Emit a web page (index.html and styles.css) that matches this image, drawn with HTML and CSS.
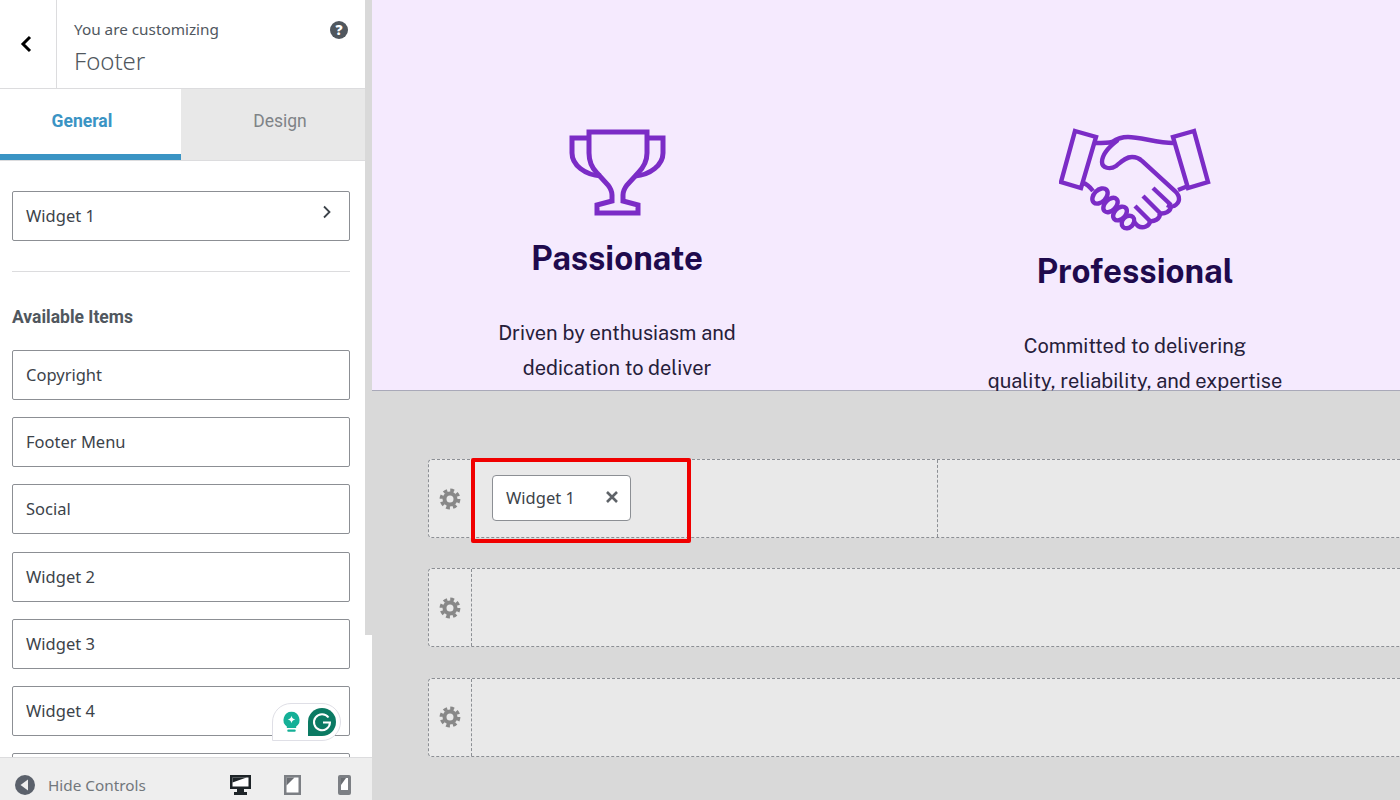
FILE: index.html
```html
<!DOCTYPE html>
<html lang="en">
  <head>
    <meta charset="UTF-8" />
    <title>Customizing Footer</title>
    <link rel="stylesheet" href="styles.css">
  </head>
  <body>
    <div class="app">
      <aside class="sidebar">
        <div class="sidebar-main">
          <div class="panel">
            <header class="panel-head">
              <div class="back-cell">
                <svg width="14" height="20" viewBox="0 0 14 20"><path d="M11 3 4 10l7 7" fill="none" stroke="#000" stroke-width="3"/></svg>
              </div>
              <div class="title-cell">
                <span class="title-small">You are customizing</span>
                <span class="title-big">Footer</span>
              </div>
              <svg class="help-icon" width="18" height="18" viewBox="0 0 18 18">
                <circle cx="9" cy="9" r="9" fill="#50575e"/>
                <text x="9" y="14" text-anchor="middle" class="help-mark">?</text>
              </svg>
            </header>

            <div class="tabs">
              <div class="tab tab-active">General</div>
              <div class="tab tab-design">Design</div>
            </div>

            <div class="panel-body">
              <div class="item item-link">
                Widget 1
                <svg class="item-arrow" width="10" height="14" viewBox="0 0 10 14"><path d="M2 1.5 7.5 7 2 12.500" fill="none" stroke="#3c434a" stroke-width="1.800"/></svg>
              </div>
              <hr class="divider" />
              <h3 class="group-title">Available Items</h3>
              <div class="item-list">
                <div class="item">Copyright</div>
                <div class="item">Footer Menu</div>
                <div class="item">Social</div>
                <div class="item">Widget 2</div>
                <div class="item">Widget 3</div>
                <div class="item">Widget 4</div>
                <div class="item"></div>
              </div>
            </div>
          </div>
          <div class="scroll-track"></div>
        </div>

        <div class="grammarly">
          <svg width="19" height="22" viewBox="0 0 22 26">
            <path d="M11 1a9.500 9.500 0 0 0-5.500 17.200V20h11v-1.800A9.500 9.500 0 0 0 11 1z" fill="#15b097"/>
            <path d="M11 5.500c.6 2.800 1.700 3.900 4.500 4.500-2.800.6-3.900 1.700-4.500 4.500-.6-2.800-1.700-3.900-4.500-4.500 2.800-.6 3.900-1.700 4.500-4.500z" fill="#fff"/>
            <rect x="6" y="22" width="10" height="2.500" rx="1.200" fill="#15b097"/>
          </svg>
          <svg width="28" height="28" viewBox="0 0 28 28">
            <path d="M14 0a14 14 0 0 1 0 28H0V14A14 14 0 0 1 14 0z" fill="#0b7a63"/>
            <path d="M20.500 9.500a8 8 0 1 0 1.500 5H15" fill="none" stroke="#fff" stroke-width="2"/>
          </svg>
        </div>

        <footer class="controls">
          <div class="hide-controls">
            <svg width="20" height="20" viewBox="0 0 20 20">
              <circle cx="10" cy="10" r="10" fill="#5b616b"/>
              <path d="M13 4.500v11L5.500 10z" fill="#eee"/>
            </svg>
            <span>Hide Controls</span>
          </div>
          <div class="devices">
            <svg width="21" height="20" viewBox="0 0 21 20">
              <path d="M0 0h21v14h-7v3h3v3H4v-3h3v-3H0z" fill="#1d2327"/>
              <path d="M2.500 2.500h16v9h-16z" fill="#fff"/>
              <path d="M2.500 2.500h14L2.500 7.500z" fill="#1d2327"/>
            </svg>
            <svg width="17" height="20" viewBox="0 0 17 20">
              <path d="M0 0h17v20H0z" fill="#7c7f84"/>
              <path d="M2.500 2.500h12v15h-12z" fill="#fff"/>
              <path d="M2.500 2.500h8l-8 8z" fill="#6a6d72"/>
            </svg>
            <svg class="device-phone" width="13" height="20" viewBox="0 0 13 20">
              <rect width="13" height="20" rx="2" fill="#7c7f84"/>
              <path d="M3 3h7v12H3z" fill="#fff"/>
              <path d="M3 3h5l-5 7z" fill="#6a6d72"/>
            </svg>
          </div>
        </footer>
      </aside>

      <main class="preview">
        <section class="site">
          <div class="feature">
            <svg class="feature-icon" width="103" height="90" viewBox="26 17 103 90">
              <g fill="none" stroke="#7b2cc6" stroke-width="5">
                <path d="M49 22H107V43C107 52 103 58 98 63L87 75C84 79 83 81 83 85V91L98 95V103H57V95L72 91V85C72 81 71 79 68 75L57 63C52 58 49 52 49 43Z"/>
                <path d="M49 28H32V43C32 55 45 65 61 66"/>
                <path d="M107 28H123V43C123 55 110 65 95 66"/>
              </g>
            </svg>
            <h2 class="title-one">Passionate</h2>
            <p>Driven by enthusiasm and<br>dedication to deliver</p>
          </div>
          <div class="feature feature-two">
            <svg class="feature-icon" width="152" height="104" viewBox="19 18 152 104">
              <g fill="none" stroke="#7b2cc6" stroke-width="4.400">
                <path d="M35 21 56 27 41 78 21 72Z"/>
                <path d="M154 21 133 27 148 78 168 72Z"/>
                <path d="M55 33C62 33 68 33 72 32C78 28 82 27 88 27C100 27 118 33 133 33"/>
                <path d="M78 30C70 36 62 44 62 52C62 58 70 60 76 56C82 51 86 47 92 47C96 47 99 48 102 51L135 81C141 87 140 93 134 96C131 97 129 96 127 95"/>
                <path d="M148 76 138 80"/>
                <path d="M43 73C47 74 50 77 53 81"/>
                <path d="M113 78 131 95"/>
                <path d="M131 96C131 101 125 105 118 103"/>
                <path d="M103 86 120 103"/>
                <path d="M120 104C120 109 114 112 109 111"/>
                <path d="M95 96 110 111"/>
                <path d="M110 111C110 116 103 119 98 116L93 111"/>
                <ellipse cx="60" cy="86" rx="6" ry="9" transform="rotate(45 60 86)"/>
                <ellipse cx="70.500" cy="95" rx="5.500" ry="8.500" transform="rotate(45 70.500 95)"/>
                <ellipse cx="80" cy="103.500" rx="5.500" ry="8" transform="rotate(45 80 103.500)"/>
                <ellipse cx="88" cy="112" rx="5.500" ry="7" transform="rotate(45 88 112)"/>
              </g>
            </svg>
            <h2 class="title-two">Professional</h2>
            <p>Committed to delivering<br>quality, reliability, and expertise</p>
          </div>
        </section>

        <section class="builder">
          <div class="row">
            <div class="row-gear">
              <svg class="gear" width="22" height="22" viewBox="0 0 22 22"><use href="#gear"/></svg>
            </div>
            <div class="row-col row-col-first">
              <div class="chip">
                <span>Widget 1</span>
                <svg width="14" height="14" viewBox="0 0 14 14"><path d="M2 2l10 10M12 2 2 12" stroke="#5f6368" stroke-width="2.600"/></svg>
              </div>
            </div>
            <div class="row-col"></div>
            <div class="highlight"></div>
          </div>
          <div class="row">
            <div class="row-gear">
              <svg class="gear" width="22" height="22" viewBox="0 0 22 22"><use href="#gear"/></svg>
            </div>
            <div class="row-col"></div>
          </div>
          <div class="row">
            <div class="row-gear">
              <svg class="gear" width="22" height="22" viewBox="0 0 22 22"><use href="#gear"/></svg>
            </div>
            <div class="row-col"></div>
          </div>
        </section>
      </main>
    </div>

    <svg width="0" height="0" class="defs">
      <defs>
        <g id="gear" fill="none" stroke="#888">
          <circle cx="11" cy="11" r="5.500" stroke-width="4"/>
          <circle cx="11" cy="11" r="8.700" stroke-width="3.400" stroke-dasharray="3.800 3.030"/>
        </g>
      </defs>
    </svg>
  </body>
</html>
```

FILE: styles.css
```css
* {
  box-sizing: border-box;
}

html,
body {
  margin: 0;
  height: 100%;
  overflow: hidden;
}

body {
  font-family: "Noto Sans", "Open Sans", sans-serif;
  color: #3c434a;
  background: #d9d9d9;
}

.app {
  display: flex;
  height: 800px;
}

/* ===== Sidebar ===== */
.sidebar {
  position: relative;
  flex: 0 0 372px;
  display: flex;
  flex-direction: column;
  height: 800px;
  background: #fff;
}

.sidebar-main {
  flex: 1;
  display: flex;
  min-height: 0;
  overflow: hidden;
}

.panel {
  flex: 0 0 365px;
}

.scroll-track {
  flex: 0 0 7px;
  height: 635px;
  background: #d9d9d9;
}

.panel-head {
  position: relative;
  display: flex;
  height: 89px;
  border-bottom: 1px solid #dcdcde;
}

.back-cell {
  flex: 0 0 57px;
  display: flex;
  align-items: center;
  padding-left: 19px;
  border-right: 1px solid #dcdcde;
}

.title-cell {
  display: flex;
  flex-direction: column;
  padding: 19px 0 0 17px;
}

.title-small {
  font-size: 15.300px;
  line-height: 20px;
  color: #50575e;
}

.title-big {
  margin-top: 2px;
  font-size: 24px;
  line-height: 40px;
  font-weight: 300;
  color: #50575e;
}

.help-icon {
  position: absolute;
  top: 21px;
  right: 17px;
}

.help-mark {
  font-family: "Open Sans", sans-serif;
  font-size: 14px;
  font-weight: 800;
  fill: #fff;
}

.tabs {
  display: flex;
  height: 72px;
  border-bottom: 1px solid #dcdcde;
}

.tab {
  flex: 1;
  display: flex;
  align-items: center;
  justify-content: center;
  padding-bottom: 8px;
  font-family: Roboto, sans-serif;
  font-size: 17.500px;
  color: #7f8387;
  background: #e8e8e8;
}

.tab-design {
  padding-left: 14px;
}

.tab-active {
  flex: 0 0 181px;
  font-weight: 700;
  color: #3a94c4;
  background: #fff;
  border-bottom: 6px solid #3a94c4;
  padding: 0 17px 2px 0;
}

.panel-body {
  padding: 30px 15px 0 12px;
}

.item {
  display: flex;
  align-items: center;
  height: 50px;
  padding: 0 0 1px 13px;
  border: 1px solid #8c8f94;
  border-radius: 2px;
  font-size: 16.500px;
  color: #3c434a;
  background: #fff;
}

.item-link {
  justify-content: space-between;
  padding: 0 17px 2px 13px;
}

.item-arrow {
  margin-bottom: 6px;
}

.divider {
  height: 1px;
  margin: 30px 0 0;
  border: 0;
  background: #dcdcde;
}

.group-title {
  margin: 35px 0 0;
  font-family: Roboto, sans-serif;
  font-size: 17.500px;
  line-height: 20px;
  font-weight: 700;
  color: #50575e;
}

.item-list {
  display: flex;
  flex-direction: column;
  gap: 17.200px;
  margin-top: 23px;
}

.grammarly {
  position: absolute;
  left: 272px;
  top: 703px;
  display: flex;
  align-items: center;
  gap: 7px;
  width: 69px;
  height: 38px;
  padding-left: 9px;
  background: #fff;
  border: 1px solid #dfdfe6;
  border-radius: 19px 19px 19px 0;
}

.controls {
  display: flex;
  align-items: center;
  justify-content: space-between;
  height: 43px;
  padding: 12px 21px 0 15px;
  background: #eeeeee;
  border-top: 1px solid #dcdcde;
}

.hide-controls {
  display: flex;
  align-items: center;
  gap: 13px;
  font-size: 15.300px;
  color: #72777c;
}

.devices {
  display: flex;
  align-items: center;
  gap: 33px;
}

.device-phone {
  margin-left: 4px;
}

/* ===== Preview ===== */
.preview {
  flex: 1;
  min-width: 0;
  overflow: hidden;
}

.site {
  display: grid;
  grid-template-columns: 490px 490px;
  gap: 28px;
  height: 391px;
  background: #f5eafe;
  border-bottom: 1px solid #a9a9b9;
  font-family: "Public Sans", Inter, sans-serif;
  text-align: center;
}

.feature {
  padding-top: 127px;
}

.feature-two {
  padding-top: 128px;
}

.feature-icon {
  display: block;
  margin: 0 auto;
}

.feature h2 {
  font-size: 33px;
  line-height: 40px;
  font-weight: 700;
  color: #1f0a4d;
}

.feature .title-one {
  margin: 21px 0 0;
}

.feature .title-two {
  margin: 19px 0 0;
}

.feature p {
  margin: 38px 0 0;
  font-size: 20px;
  line-height: 35px;
  color: #26203a;
}

.builder {
  position: relative;
  display: flex;
  flex-direction: column;
  gap: 30.400px;
  padding: 68px 0 0 56px;
}

.row {
  position: relative;
  display: flex;
  flex: 0 0 auto;
  width: 1040px;
  height: 79px;
  background: #e9e9e9;
  border: 1px dashed #8c8f94;
  border-radius: 4px;
}

.row-gear {
  flex: 0 0 43px;
  display: flex;
  align-items: center;
  justify-content: center;
  border-right: 1px dashed #8c8f94;
}

.row-col {
  flex: 1;
}

.row-col-first {
  flex: 0 0 466px;
  padding: 15px 0 0 20px;
  border-right: 1px dashed #8c8f94;
}

.chip {
  display: flex;
  align-items: center;
  justify-content: space-between;
  width: 139px;
  height: 46px;
  padding: 0 11px 2px 13px;
  background: #fff;
  border: 1px solid #8c8f94;
  border-radius: 4px;
  font-size: 16.500px;
  color: #3c434a;
}

.highlight {
  position: absolute;
  left: 42px;
  top: -2px;
  width: 220px;
  height: 85px;
  border: 4px solid #f00000;
  border-radius: 2px;
}

.defs {
  position: absolute;
}
```
